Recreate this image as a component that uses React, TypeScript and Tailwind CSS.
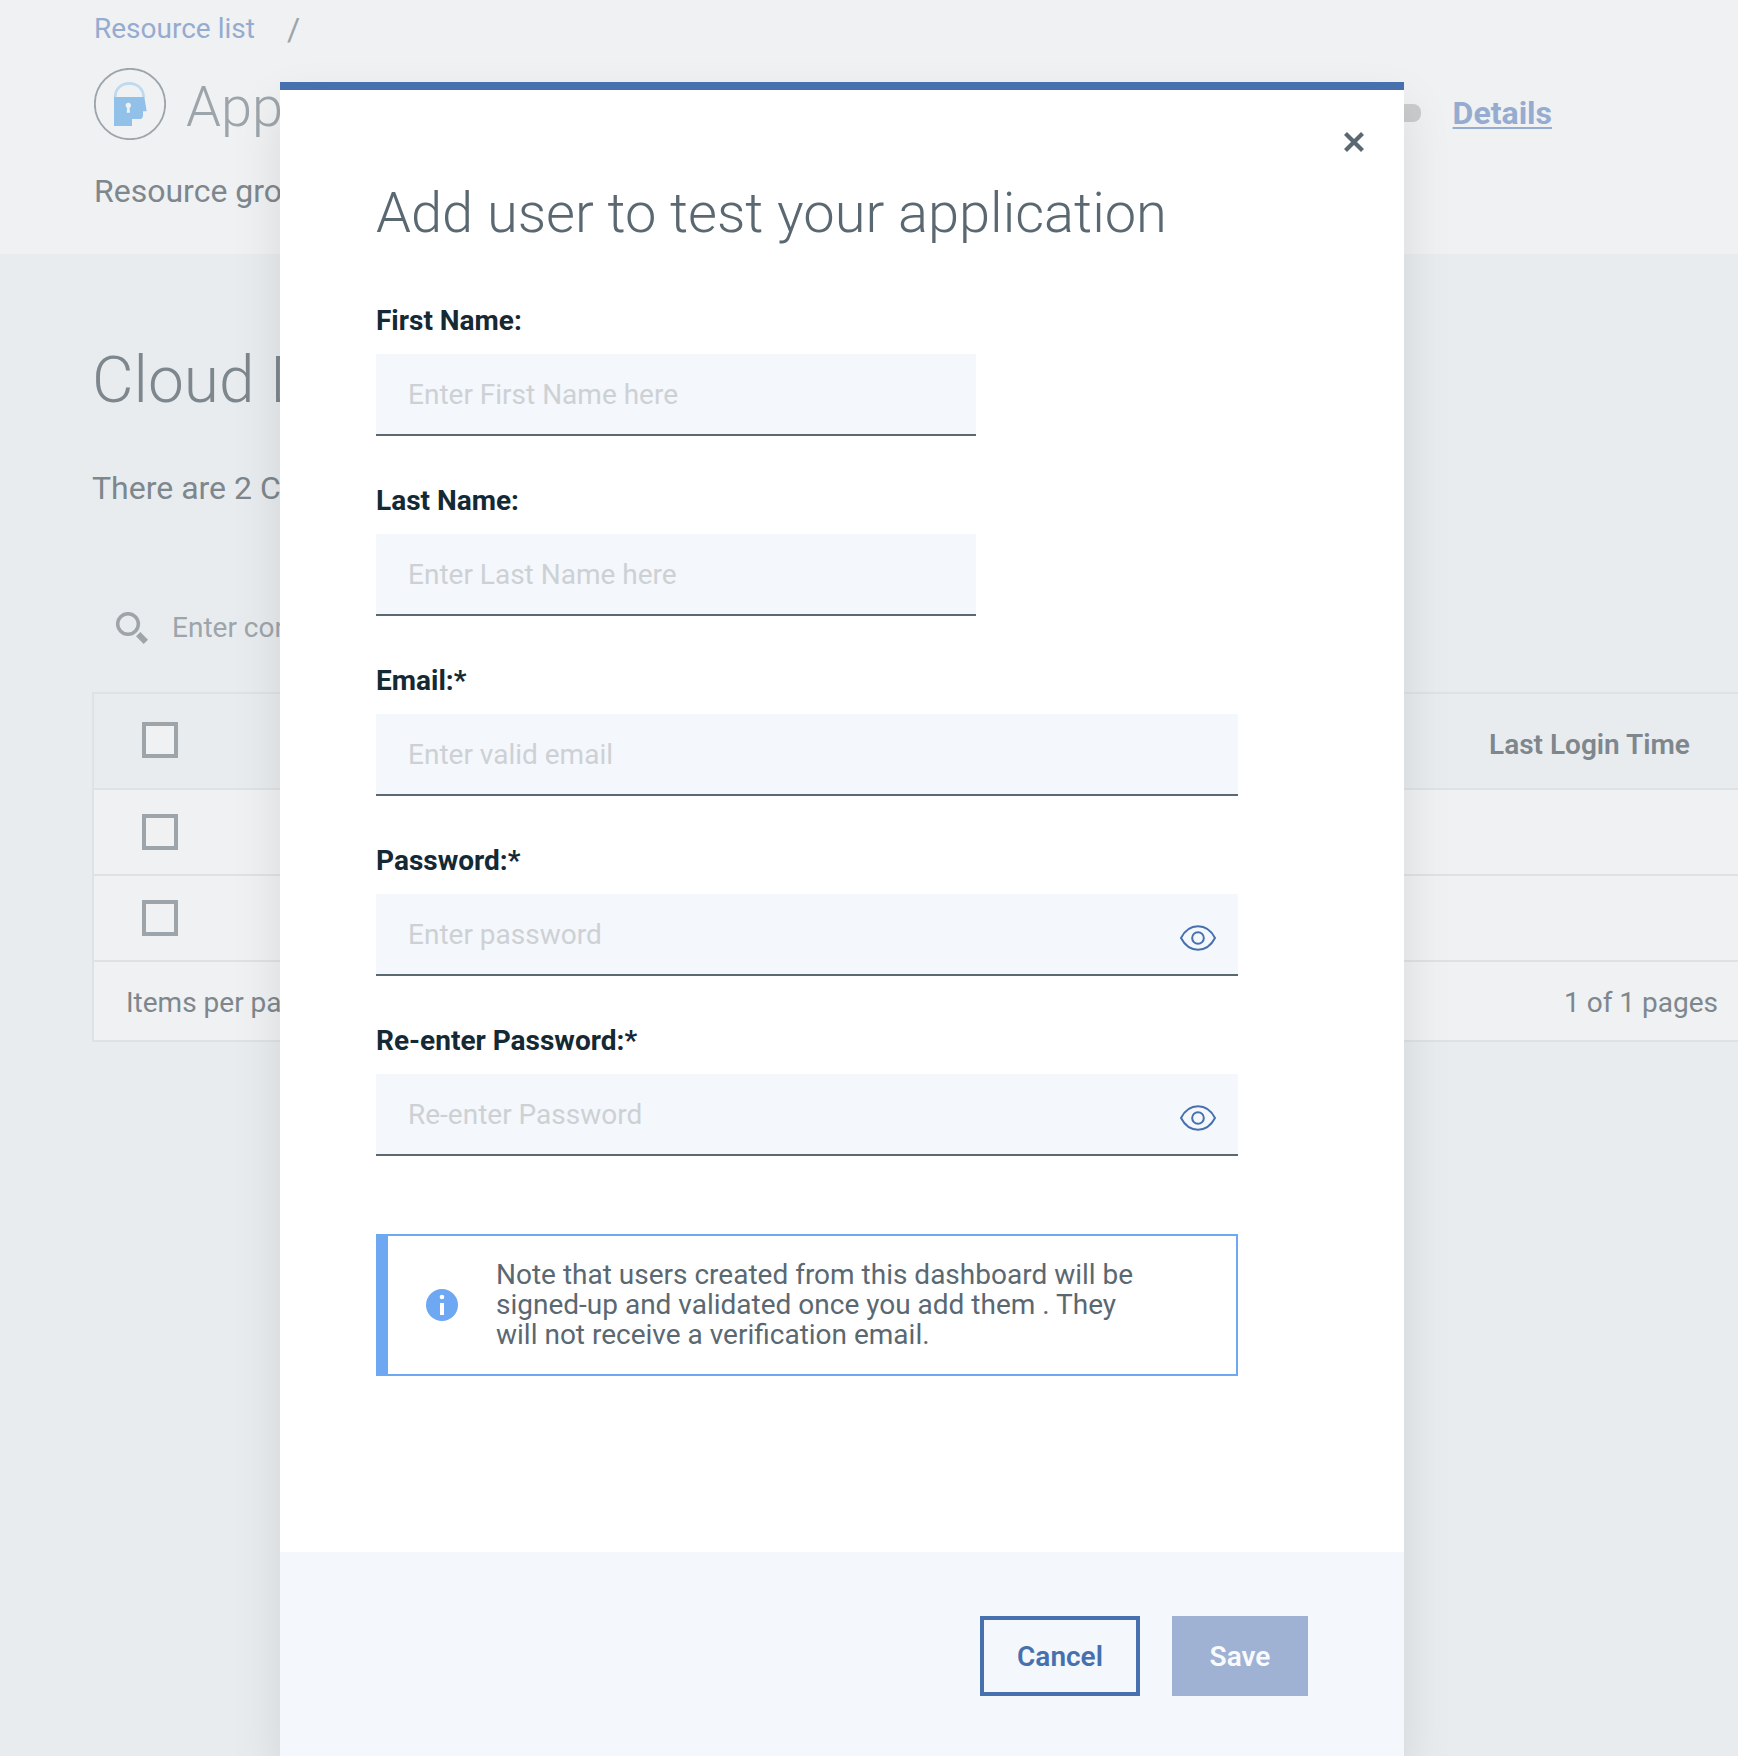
import type { ReactNode } from "react";

function AppIdLogo() {
  return (
    <svg viewBox="42 204 216 216" className="size-[72px] shrink-0" aria-hidden="true">
      <circle cx="150" cy="312" r="105.5" fill="none" stroke="#9da5ab" strokeWidth="5.5" />
      <path d="M105.5 292 C105.5 236 189.5 236 191 292" fill="none" stroke="#bfd9ef" strokeWidth="8" />
      <path
        d="M102 291 H193 L200 334 H189 V347 Q188 357 178 357 H156 V378 H102 Z"
        fill="#91c0e9"
      />
      <circle cx="145" cy="316" r="8" fill="#eff1f3" />
      <path d="M142 318 h6 l2 20 h-10 z" fill="#eff1f3" />
    </svg>
  );
}

function SearchIcon() {
  return (
    <svg viewBox="108 846 96 96" className="size-8 shrink-0" aria-hidden="true">
      <circle cx="144" cy="882" r="31" fill="none" stroke="#9da5ab" strokeWidth="10.5" />
      <path d="M181 906 L204 929 L191 942 L168 919 Z" fill="#9da5ab" />
    </svg>
  );
}

function EyeIcon() {
  return (
    <svg viewBox="120 120 108 108" className="size-9" fill="none" stroke="#4670ae" strokeWidth="6" aria-hidden="true">
      <path
        strokeLinejoin="round"
        d="M123 174 C135 151 153 139 174 139 C195 139 213 151 225 174 C213 197 195 209 174 209 C153 209 135 197 123 174 Z"
      />
      <circle cx="174" cy="174" r="17.5" />
    </svg>
  );
}

function InfoIcon() {
  return (
    <svg viewBox="0 0 32 32" className="size-8 shrink-0" aria-hidden="true">
      <circle cx="16" cy="16" r="16" fill="#6ea8f3" />
      <circle cx="16" cy="8" r="2.3" fill="#fff" />
      <rect x="14" y="14" width="4" height="12" fill="#fff" />
    </svg>
  );
}

interface FieldProps {
  id: string;
  label: string;
  placeholder: string;
  type?: string;
  width?: "short" | "full";
}

function Field({ id, label, placeholder, type = "text", width = "full" }: FieldProps) {
  return (
    <div className={width === "short" ? "w-full max-w-[600px]" : "w-full"}>
      <label htmlFor={id} className="block text-[28px] leading-[30px] font-bold text-[#152934]">
        {label}
      </label>
      <div className="relative mt-[18px]">
        <input
          id={id}
          type={type}
          placeholder={placeholder}
          className="block h-[82px] w-full border-b-2 border-[#5a6872] bg-[#f4f7fc] px-8 text-[28px] text-[#152934] outline-none placeholder:text-[#cdd1d4]"
        />
        {type === "password" && (
          <button type="button" aria-label={`Show ${placeholder}`} className="absolute top-[26px] right-[22px]">
            <EyeIcon />
          </button>
        )}
      </div>
    </div>
  );
}

function Check({ label }: { label: string }) {
  return (
    <input
      type="checkbox"
      aria-label={label}
      className="block size-9 appearance-none border-4 border-[#9da5ab] bg-[#eff1f3]"
    />
  );
}

function Cell({ children }: { children?: ReactNode }) {
  return <td className="h-[86px] border-b-2 border-[#dfe2e4] pl-12">{children}</td>;
}

function Header() {
  return (
    <header className="bg-[#eff1f3] pt-3.5 pb-[47px] pl-[94px]">
      <nav className="flex gap-8 text-[28px] leading-[30px]">
        <a href="#resources" className="text-[#95abcf]">
          Resource list
        </a>
        <span className="text-[32px] text-[#9da5ab]">/</span>
      </nav>
      <div className="mt-6 flex items-start">
        <AppIdLogo />
        <h1 className="mt-[7px] ml-5 text-[56px] leading-[64px] font-light text-[#9da5ab]">App</h1>
        <div className="mt-7 mr-[186px] ml-auto flex items-center gap-8">
          <span className="h-[18px] w-24 rounded-lg bg-[#cbcccd]" />
          <a href="#details" className="text-[32px] leading-[34px] font-bold text-[#95abcf] underline decoration-2 underline-offset-3">
            Details
          </a>
        </div>
      </div>
      <p className="mt-[35px] text-[32px] leading-8 text-[#7d878d]">Resource gro</p>
    </header>
  );
}

function UsersPanel() {
  return (
    <main className="pt-[95px] pl-[92px] text-[#7d878d]">
      <h2 className="text-[64px] leading-[64px] font-light">Cloud D</h2>
      <p className="mt-[59px] text-[32px] leading-8">There are 2 C</p>
      <label className="mt-[107px] flex items-center gap-6 pl-6">
        <SearchIcon />
        <input
          type="search"
          aria-label="Search users"
          placeholder="Enter con"
          className="h-[34px] w-[400px] bg-transparent text-[28px] outline-none placeholder:text-[#9da5ab]"
        />
      </label>
      <div className="mt-[47px] border-y-2 border-l-2 border-[#dfe2e4]">
        <table className="w-full border-separate border-spacing-0 text-left text-[28px] leading-[30px]">
          <thead>
            <tr>
              <th className="h-24 border-b-2 border-[#dfe2e4] pt-7 pl-12 align-top">
                <Check label="Select all users" />
              </th>
              <th className="h-24 w-[249px] border-b-2 border-[#dfe2e4] pt-9 align-top font-semibold">
                Last Login Time
              </th>
            </tr>
          </thead>
          <tbody className="bg-[#eff1f3]">
            <tr>
              <Cell>
                <Check label="Select user 1" />
              </Cell>
              <Cell />
            </tr>
            <tr>
              <Cell>
                <Check label="Select user 2" />
              </Cell>
              <Cell />
            </tr>
          </tbody>
        </table>
        <div className="flex h-[78px] items-center justify-between bg-[#eff1f3] pt-1 pr-5 pl-8 text-[28px] leading-[30px]">
          <span>Items per pa</span>
          <span>1 of 1 pages</span>
        </div>
      </div>
    </main>
  );
}

function AddUserModal() {
  return (
    <div className="absolute inset-0 flex pt-[82px] pr-[334px] pl-[280px]">
      <form
        role="dialog"
        aria-labelledby="modal-title"
        className="flex flex-1 flex-col border-t-8 border-[#4670ae] bg-white shadow-[0_24px_48px_rgba(0,0,0,0.1)]"
      >
        <div className="flex justify-end pt-[42px] pr-10">
          <button type="button" aria-label="Close">
            <svg viewBox="0 0 20 20" className="size-5" stroke="#5a6872" strokeWidth="4.2" aria-hidden="true">
              <path d="M1.5 1.5 L18.5 18.5 M18.5 1.5 L1.5 18.5" />
            </svg>
          </button>
        </div>
        <div className="pt-[29px] pr-[166px] pb-[176px] pl-24">
          <h2 id="modal-title" className="text-[56px] leading-[64px] font-light whitespace-nowrap text-[#5a6872]">
            Add user to test your application
          </h2>
          <div className="mt-[61px] flex flex-col gap-[50px]">
            <Field id="first-name" label="First Name:" placeholder="Enter First Name here" width="short" />
            <Field id="last-name" label="Last Name:" placeholder="Enter Last Name here" width="short" />
            <Field id="email" label="Email:*" placeholder="Enter valid email" type="email" />
            <Field id="password" label="Password:*" placeholder="Enter password" type="password" />
            <Field id="password-again" label="Re-enter Password:*" placeholder="Re-enter Password" type="password" />
          </div>
          <div className="mt-[78px] flex items-center gap-[38px] border-2 border-l-12 border-[#6ea8f3] py-6 pr-20 pl-[38px]">
            <InfoIcon />
            <p className="flex-1 text-[28px] leading-[30px] text-[#5a6872]">
              Note that users created from this dashboard will be signed-up and validated once you add them . They will
              not receive a verification email.
            </p>
          </div>
        </div>
        <footer className="flex flex-1 items-start justify-end gap-8 bg-[#f4f7fc] px-24 pt-16 pb-[60px] text-[28px] leading-7 font-semibold">
          <button type="button" className="h-20 w-40 border-4 border-[#4670ae] pt-0.5 text-[#4670ae]">
            Cancel
          </button>
          <button type="submit" disabled className="h-20 w-[136px] bg-[#9fb2d4] pt-0.5 text-[#f9fafc]">
            Save
          </button>
        </footer>
      </form>
    </div>
  );
}

export default function App() {
  return (
    <div className="relative min-h-screen overflow-hidden bg-[#e8ecef] font-['Roboto',sans-serif]">
      <Header />
      <UsersPanel />
      <AddUserModal />
    </div>
  );
}
